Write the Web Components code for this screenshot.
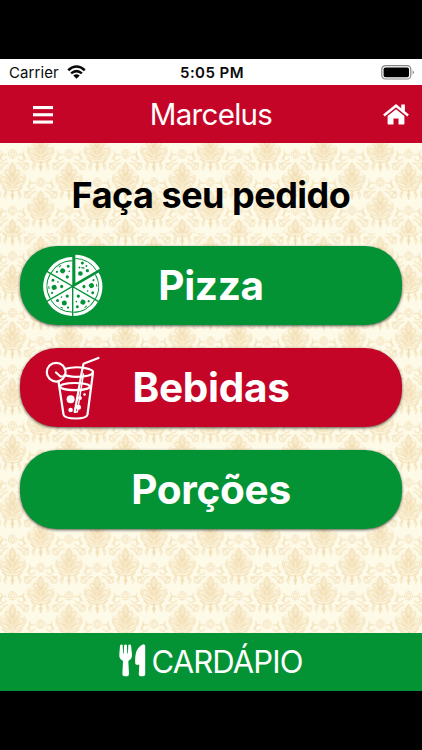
<!DOCTYPE html>
<html lang="pt-BR">
<head>
<meta charset="utf-8">
<title>Marcelus</title>
<style>
  body { margin: 0; background: #000; font-family: Inter, "Liberation Sans", sans-serif; }
</style>
</head>
<body>
<order-app></order-app>
<script>
const define = (name, html) => customElements.define(name, class extends HTMLElement {
  constructor() {
    super();
    const t = document.createElement('template');
    t.innerHTML = html;
    this.attachShadow({ mode: 'open' }).append(t.content.cloneNode(true));
  }
});

define('status-bar', `
<style>
  :host { display: grid; grid-template-columns: 1fr auto 1fr; align-items: center; height: 26px; padding: 0 7px 0 9px; box-sizing: border-box; background: #fff; color: #0a0a0a; font-size: 15px; }
  .left { display: flex; align-items: center; gap: 8px; letter-spacing: 0.1px; }
  .time { font-weight: 600; font-size: 15px; letter-spacing: .45px; }
  .right { display: flex; justify-content: flex-end; }
  svg { display: block; }
</style>
<div class="left"><span>Carrier</span>
  <svg width="19" height="14" viewBox="0 0 19 14"><g fill="none" stroke="#0a0a0a" stroke-width="2.5"><path d="M1.2 5.2Q9.5-2.2 17.8 5.2"/><path d="M4.1 8.4Q9.5 3.8 14.9 8.4"/></g><path d="M6.3 10.5Q9.5 8 12.700 10.500L9.500 13.700Z"/></svg>
</div>
<span class="time">5:05 PM</span>
<div class="right"><svg width="34" height="15" viewBox="0 0 34 15"><rect x=".8" y=".7" width="29" height="13.3" rx="3.6" fill="none" stroke="#858585" stroke-width="1.2"/><rect x="2.6" y="2.5" width="25.4" height="9.8" rx="1.8"/><path d="M31.6 5Q34.2 7.3 31.6 9.7Z" fill="#858585"/></svg></div>`);

define('title-bar', `
<style>
  :host { display: grid; grid-template-columns: 60px 1fr 60px; align-items: center; height: 58px; padding: 1px 13px 0 33px; box-sizing: border-box; background: #c40527; color: #fff; }
  h1 { margin: 0; font-size: 29.5px; font-weight: 400; line-height: 40px; letter-spacing: -.7px; text-align: center; white-space: nowrap; padding: 0 20px 2px 0; }
  .home { justify-self: end; }
  svg { display: block; }
</style>
<svg width="20" height="18" viewBox="0 0 20 18" fill="#fff"><rect width="20" height="3.1" y="0"/><rect width="20" height="3.1" y="7.2"/><rect width="20" height="3.1" y="14.5"/></svg>
<h1><slot></slot></h1>
<svg class="home" width="26" height="21" viewBox="0 0 26 21"><path d="M.9 11.4L13 1.700L25.100 11.400" fill="none" stroke="#fff" stroke-width="2.500"/><path d="M18.200 .6h3.700v7.700L18.200 5.400Z" fill="#fff"/><path d="M4.600 11.900L13 5.200l8.400 6.700v7.700q0 .9-.9.9h-5V14.500h-5v6h-5q-.9 0-.9-.9Z" fill="#fff"/></svg>`);

define('damask-paper', `
<style>
  :host { display: block; }
  svg { display: block; width: 100%; height: 100%; }
</style>
<svg viewBox="0 0 422 490">
  <defs>
    <g id="half" fill="none" stroke="#f0d8a8" stroke-width="1.2" stroke-linecap="round">
      <path d="M0-13Q3-10 3-6Q2-3 0-1M1 1Q2-6 6-6Q8-4 6-1Q3 1 1 4M1 6Q6 0 10 1Q13 4 9 6Q4 7 2 10M1 12Q9 11 12 6Q14 3 12-1M0 15Q7 14 10 11" opacity=".6"/>
      <path d="M0-13Q5-7 2-2Q6-5 6-1Q4 2 3 4Q7 2 9 4Q6 9 0 12Z" fill="#f1d6a3" stroke="none" opacity=".32"/>
      <path d="M0 14V23M0 17L1.500 19L0 22" opacity=".65"/>
      <path d="M0-26a4 4 0 0 1 0 8M0-24a2 2 0 0 1 0 4" opacity=".65" stroke-width="1"/>
      <path d="M6-21Q12-23 12-17Q9-13 6-17M5-13Q10-12 11-7Q16-5 16-10Q14-14 10-13M15 11Q19 8 17 4M6 16Q10 18 7 22M12 16Q16 16 16 20M19-17Q23-14 22-9" stroke="#f1ddb3" stroke-width="1.500" opacity=".65"/>
    </g>
    <g id="motif">
      <path d="M0-14Q13-4 14 4Q12 13 0 17Q-12 13-14 4Q-13-4 0-14Z" fill="#f6e3bb" opacity=".2"/>
      <use href="#half"/><use href="#half" transform="scale(-1 1)"/>
    </g>
    <g id="cell">
      <rect x="-1" y="-1" width="59" height="59" fill="#fffced"/>
      <use href="#motif" x="12.4" y="0"/><use href="#motif" x="12.4" y="56.6"/>
      <use href="#motif" x="69" y="0"/><use href="#motif" x="69" y="56.6"/>
      <use href="#motif" x="40.7" y="28.3"/><use href="#motif" x="-15.9" y="28.3"/>
    </g>
    <pattern id="top" width="56.6" height="56.6" patternUnits="userSpaceOnUse" y="33"><use href="#cell"/></pattern>
    <pattern id="rest" width="56.6" height="56.6" patternUnits="userSpaceOnUse" y="78.6"><use href="#cell"/></pattern>
  </defs>
  <rect width="422" height="490" fill="#fffced"/>
  <rect y="90" width="422" height="400" fill="url(#rest)"/>
  <rect width="422" height="90" fill="url(#top)"/>
  <rect width="422" height="490" fill="#f5d69a" opacity=".05"/>
</svg>`);

define('category-button', `
<style>
  :host { display: grid; grid-template-columns: 64px 1fr 64px; align-items: center; height: 79px; padding: 0 21px; box-sizing: border-box; border-radius: 37px; color: #fff; background: #039335; box-shadow: 0 1px 3px rgba(0,0,0,.65); }
  :host([tone="red"]) { background: #c40527; }
  .label { grid-column: 2; text-align: center; font-size: 40.5px; line-height: 50px; font-weight: 700; letter-spacing: -.3px; white-space: nowrap; }
  ::slotted([slot="icon"]) { grid-column: 1; grid-row: 1; }
</style>
<slot name="icon"></slot><span class="label"><slot></slot></span>`);

define('pizza-icon', `
<style>:host { display: block; height: 66px; } svg { display: block; }</style>
<svg width="64" height="66" viewBox="0 0 64 66">
  <defs>
    <g id="slice"><path d="M0 0V-28.300A28.300 28.300 0 0 1 24.500-14.150Z" fill="#fff"/><path d="M0-24.5A24.5 24.5 0 0 1 21.2-12.25" fill="none" stroke="#039335" stroke-width="1"/></g>
    <g id="tops" fill="#039335"><circle cx="5" cy="-9.5" r="2.3"/><circle cx="12" cy="-12.3" r="1.6"/><circle cx="7" cy="-20" r="1.5"/><circle cx="4" cy="-15.5" r=".9"/><circle cx="11" cy="-17" r=".9"/><path d="M6-15.4l3 .5" stroke="#039335" stroke-width="1.2"/></g>
    <g id="tops2" fill="#039335"><circle cx="7.7" cy="-15.5" r="2.5"/><circle cx="4.8" cy="-8.5" r="1.6"/><circle cx="14.5" cy="-13" r="1.5"/><circle cx="4" cy="-20" r="1.1"/><circle cx="10.5" cy="-9.5" r=".8"/><path d="M9-20.5l2.5.8" stroke="#039335" stroke-width="1"/></g>
  </defs>
  <g transform="translate(31.8 33.500)">
    <g transform="translate(2.600 -3.500)"><use href="#slice"/><use href="#tops"/></g>
    <g transform="rotate(60) translate(.8 -1.100)"><use href="#slice"/><use href="#tops2"/></g>
    <g transform="rotate(120) translate(.8 -1.100)"><use href="#slice"/><use href="#tops2"/></g>
    <g transform="rotate(180) translate(.8 -1.100)"><use href="#slice"/><use href="#tops2"/></g>
    <g transform="rotate(240) translate(.8 -1.100)"><use href="#slice"/><use href="#tops2"/></g>
    <g transform="rotate(300) translate(.8 -1.100)"><use href="#slice"/><use href="#tops2"/></g>
  </g>
</svg>`);

define('drink-icon', `
<style>:host { display: block; height: 66px; } svg { display: block; }</style>
<svg width="64" height="66" viewBox="0 0 64 66" fill="none" stroke="#fff" stroke-width="2.2" stroke-linecap="round" stroke-linejoin="round">
  <circle cx="15.200" cy="17.200" r="9.400"/>
  <path d="M15 17.500L19.500 21.500L23.500 21.300"/>
  <path d="M23.500 14Q33 11.300 43 12.800Q52 14.300 52 17Q51 21.700 35 21.800Q27 21.700 23.500 19.800"/>
  <path d="M17.500 26.500L22.500 59.500Q23.500 63.500 35 63.500Q45.500 63.500 46.500 59.500L52 17.500"/>
  <ellipse cx="34" cy="31.600" rx="14.800" ry="3.600"/>
  <path d="M57.500 3L42.500 8.700L40.800 17L33.700 57"/>
  <path d="M42.500 19L36.300 57H33.700" stroke-width="1.500"/>
  <g fill="#fff" stroke="none"><circle cx="29.600" cy="44.300" r="4"/><circle cx="29.600" cy="55" r="2.300"/><circle cx="37.500" cy="52.300" r="2.500"/><circle cx="39" cy="43" r="1.900"/><circle cx="43.500" cy="39.500" r="1.300"/></g>
</svg>`);

define('menu-footer', `
<style>
  :host { display: flex; align-items: center; justify-content: center; gap: 5px; height: 58px; background: #039335; color: #fff; }
  span { font-size: 31px; font-weight: 400; line-height: 40px; letter-spacing: -.85px; }
  svg { display: block; padding-bottom: 3px; }
</style>
<svg width="27" height="33" viewBox="0 0 27 33" fill="#fff"><path d="M2.200.5Q3.500.2 3.700 1.200L4.100 9.500H4.700L5.100 1.200Q5.200.4 6.500.4T7.900 1.200L8.300 9.500H8.900L9.300 1.200Q9.500.2 10.700.5Q11.900.6 12.100 1.800L13 10.500Q13.200 15 9.300 17L10 29.500Q10 32.200 8 32.200H5.500Q3.300 32.200 3.400 29.500L4 17Q0 15 .3 10.500L1 1.800Q1.200.7 2.200.5Z"/><path d="M24.500.3Q26.200.3 26.200 2V30Q26.200 32.200 24.200 32.200H21.800Q19.700 32.200 19.800 30L20.300 20.700H17.500Q16.300 20.700 16.200 19.300Q15.200 3.500 24.500.3Z"/></svg>
<span><slot></slot></span>`);

define('order-app', `
<style>
  :host { display: grid; grid-template-rows: 26px 58px 490px 58px; width: 422px; height: 750px; padding-top: 59px; box-sizing: border-box; background: #000; overflow: hidden; }
  main { position: relative; padding: 0 20px; }
  damask-paper { position: absolute; inset: 0; }
  .content { position: relative; display: flex; flex-direction: column; gap: 23px; }
  h2 { margin: 31px 0 6px; font-size: 36px; line-height: 43px; font-weight: 700; letter-spacing: -.5px; text-align: center; color: #000; white-space: nowrap; }
</style>
<status-bar></status-bar>
<title-bar>Marcelus</title-bar>
<main>
  <damask-paper></damask-paper>
  <div class="content">
    <h2>Faça seu pedido</h2>
    <category-button><pizza-icon slot="icon"></pizza-icon>Pizza</category-button>
    <category-button tone="red"><drink-icon slot="icon"></drink-icon>Bebidas</category-button>
    <category-button>Porções</category-button>
  </div>
</main>
<menu-footer>CARDÁPIO</menu-footer>`);
</script>
</body>
</html>
